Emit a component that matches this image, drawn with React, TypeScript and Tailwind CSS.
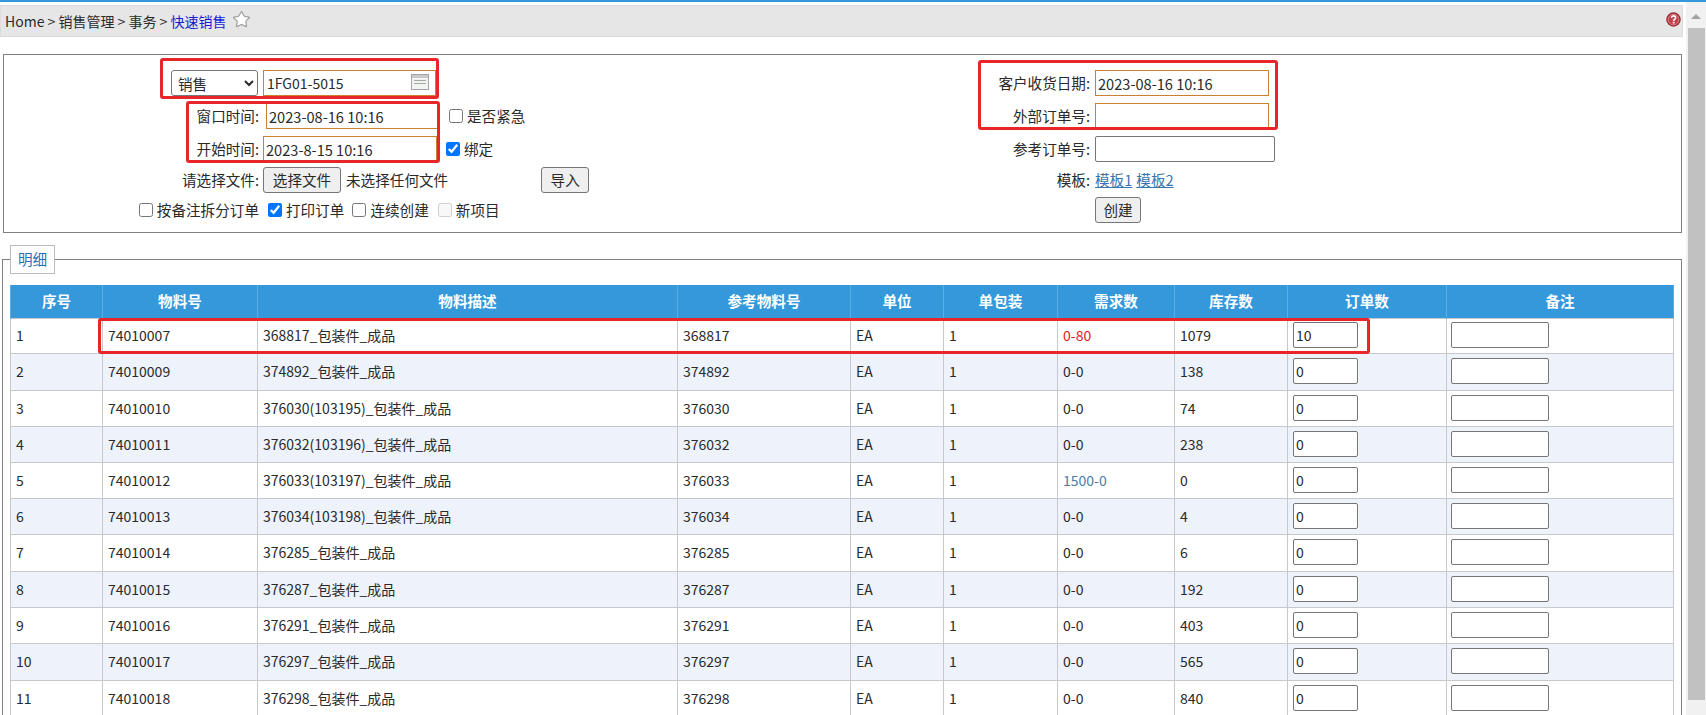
import { ReactNode } from 'react';
import { Star } from 'lucide-react';

const ROWS = [
    { no: 1, code: '74010007', desc: '368817_包装件_成品', ref: '368817', need: '0-80', stock: '1079', qty: '10', h: 'h-[35px]' },
    { no: 2, code: '74010009', desc: '374892_包装件_成品', ref: '374892', need: '0-0', stock: '138', qty: '0', h: 'h-[37px]' },
    { no: 3, code: '74010010', desc: '376030(103195)_包装件_成品', ref: '376030', need: '0-0', stock: '74', qty: '0', h: 'h-[36px]' },
    { no: 4, code: '74010011', desc: '376032(103196)_包装件_成品', ref: '376032', need: '0-0', stock: '238', qty: '0', h: 'h-[36px]' },
    { no: 5, code: '74010012', desc: '376033(103197)_包装件_成品', ref: '376033', need: '1500-0', stock: '0', qty: '0', h: 'h-[36px]' },
    { no: 6, code: '74010013', desc: '376034(103198)_包装件_成品', ref: '376034', need: '0-0', stock: '4', qty: '0', h: 'h-[36px]' },
    { no: 7, code: '74010014', desc: '376285_包装件_成品', ref: '376285', need: '0-0', stock: '6', qty: '0', h: 'h-[37px]' },
    { no: 8, code: '74010015', desc: '376287_包装件_成品', ref: '376287', need: '0-0', stock: '192', qty: '0', h: 'h-[36px]' },
    { no: 9, code: '74010016', desc: '376291_包装件_成品', ref: '376291', need: '0-0', stock: '403', qty: '0', h: 'h-[36px]' },
    { no: 10, code: '74010017', desc: '376297_包装件_成品', ref: '376297', need: '0-0', stock: '565', qty: '0', h: 'h-[37px]' },
    { no: 11, code: '74010018', desc: '376298_包装件_成品', ref: '376298', need: '0-0', stock: '840', qty: '0', h: 'h-[36px]' },
];

const HEADERS = ['序号', '物料号', '物料描述', '参考物料号', '单位', '单包装', '需求数', '库存数', '订单数', '备注'];

const needColor = (need: string) => {
    if (need === '0-80') return 'text-[#e01b24]';
    if (need === '1500-0') return 'text-[#4f7ba3]';
    return '';
};

const orangeInput = 'h-[26px] border border-[#c8812f] px-[2px] bg-white outline-none';
const grayInput = 'h-[26px] border border-[#767676] rounded-[2px] px-[2px] bg-white outline-none';
const btn = 'h-[26px] border border-[#767676] rounded-[3px] bg-[#efefef]';
const cell = 'border border-[#c6c8cc] px-[5px] pt-0 pb-[1px]';

// red marker drawn over the form / table
const Marker = ({ className }: { className: string }) => (
    <div className={`absolute border-[3px] border-[#e8262a] rounded-[3px] pointer-events-none ${className}`} />
);

const FormRow = ({ a, b, c, d, className }: { a?: ReactNode; b?: ReactNode; c?: ReactNode; d?: ReactNode; className?: string }) => (
    <div className={`grid grid-cols-[255px_531px_300px_1fr] h-[26px] items-center ${className ?? ''}`}>
        <div className="flex justify-end items-center whitespace-nowrap">{a}</div>
        <div className="flex items-center pl-[4px] whitespace-nowrap">{b}</div>
        <div className="flex justify-end items-center whitespace-nowrap">{c}</div>
        <div className="flex items-center pl-[5px] whitespace-nowrap">{d}</div>
    </div>
);

const Check = ({ checked, disabled, className }: { checked?: boolean; disabled?: boolean; className?: string }) => (
    <input type="checkbox" defaultChecked={checked} disabled={disabled} className={`w-[14px] h-[14px] m-0 ${className ?? ''}`} />
);

export default function App() {
    return (
        <div className="relative h-[715px] overflow-hidden bg-white text-[14px] leading-[20px] text-[#2a2a2a] font-['Noto_Sans_CJK_SC','Liberation_Sans',sans-serif]">
            <div className="h-[2px] bg-[#3498db]" />
            <div className="flex h-[713px]">
                <div className="w-[1686px] shrink-0">
                    {/* Breadcrumb */}
                    <div className="mt-[3px] h-[32px] w-[1683px] bg-[#e6e6e6] border border-[#dcdcdc] flex items-center pl-[4px]">
                        <span>Home &gt; 销售管理 &gt; 事务 &gt; <span className="text-[#1a1ad0]">快速销售</span></span>
                        <Star className="ml-[5px] mb-[3px] text-[#a2a2a2]" fill="#fff" size={19} strokeWidth={1.6} />
                        <svg className="ml-auto mb-[3px] mr-px" width="15" height="15" viewBox="0 0 15 15">
                            <circle cx="7.5" cy="7.5" r="7.2" fill="#98262b" />
                            <circle cx="7.5" cy="7.5" r="5.4" fill="#c2404a" stroke="#dfa6aa" strokeWidth="0.8" />
                            <path d="M5.4 5.8c.2-1.3 1.1-1.9 2.1-1.9 1.2 0 2.1.8 2.1 1.8 0 1.7-2 1.7-2 3.2" fill="none" stroke="#fff" strokeWidth="1.6" />
                            <rect x="6.8" y="9.8" width="1.7" height="1.7" fill="#fff" />
                        </svg>
                    </div>

                    {/* Form */}
                    <div className="mt-[17px] ml-[3px] w-[1679px] h-[179px] border border-[#808080] pt-[15px] flex flex-col gap-[7px] text-[14.6px]">
                        <FormRow
                            b={
                                <div className="flex items-center gap-[5px] -ml-[92px]">
                                    <select className="w-[87px] h-[26px] border border-[#767676] rounded-[3px] pl-[2px] bg-white">
                                        <option>销售</option>
                                    </select>
                                    <div className="relative">
                                        <input defaultValue="1FG01-5015" className={`${orangeInput} w-[173px] pl-[3px] text-[14px]`} />
                                        <svg className="absolute right-[7px] top-[4px]" width="18" height="16" viewBox="0 0 18 16">
                                            <rect x="0.5" y="0.5" width="17" height="15" fill="#f2f4f2" stroke="#a4a4a4" />
                                            <rect x="1" y="1" width="16" height="3" fill="#cacaca" />
                                            <path d="M3 6.5h12M3 9.5h12" stroke="#a8a8a8" />
                                        </svg>
                                    </div>
                                </div>
                            }
                            c="客户收货日期:"
                            d={<input defaultValue="2023-08-16 10:16" className={`${orangeInput} w-[174px]`} />}
                        />
                        <FormRow
                            a="窗口时间:"
                            b={
                                <div className="flex items-center">
                                    <input defaultValue="2023-08-16 10:16" className={`${orangeInput} w-[173px] ml-[3px]`} />
                                    <Check className="ml-[10px]" />
                                    <span className="ml-[4px]">是否紧急</span>
                                </div>
                            }
                            c="外部订单号:"
                            d={<input className={`${orangeInput} w-[174px]`} />}
                        />
                        <FormRow
                            a="开始时间:"
                            b={
                                <div className="flex items-center">
                                    <input defaultValue="2023-8-15 10:16" className={`${orangeInput} w-[174px]`} />
                                    <Check checked className="ml-[9px]" />
                                    <span className="ml-[4px]">绑定</span>
                                </div>
                            }
                            c="参考订单号:"
                            d={<input className={`${grayInput} w-[180px]`} />}
                        />
                        <FormRow
                            className="-mt-[2px]"
                            a="请选择文件:"
                            b={
                                <div className="flex items-center">
                                    <button className={`${btn} w-[78px]`}>选择文件</button>
                                    <span className="ml-[5px]">未选择任何文件</span>
                                    <button className={`${btn} w-[48px] ml-[93px]`}>导入</button>
                                </div>
                            }
                            c="模板:"
                            d={
                                <span className="text-[#3a75ad] underline">
                                    模板1<span className="ml-[4px]">模板2</span>
                                </span>
                            }
                        />
                        <FormRow
                            className="-mt-[3px]"
                            a={
                                <div className="flex items-center">
                                    <Check />
                                    <span className="ml-[4px]">按备注拆分订单</span>
                                </div>
                            }
                            b={
                                <div className="flex items-center ml-[5px]">
                                    <Check checked />
                                    <span className="ml-[4px]">打印订单</span>
                                    <Check className="ml-[8px]" />
                                    <span className="ml-[4px]">连续创建</span>
                                    <Check disabled className="ml-[9px]" />
                                    <span className="ml-[4px]">新项目</span>
                                </div>
                            }
                            d={<button className={`${btn} w-[46px]`}>创建</button>}
                        />
                    </div>

                    {/* Detail */}
                    <fieldset className="mt-[12px] ml-[2px] w-[1680px] border border-[#808080] pl-[7px] h-[480px]">
                        <legend className="w-[45px] h-[29px] border border-[#bcbcbc] bg-white pl-[7px] leading-[26px] text-[14.6px] text-[#2a6db5]">明细</legend>
                        <table className="mt-[11px] table-fixed border-collapse w-[1664px]">
                            <colgroup>
                                <col className="w-[92px]" />
                                <col className="w-[155px]" />
                                <col className="w-[420px]" />
                                <col className="w-[173px]" />
                                <col className="w-[93px]" />
                                <col className="w-[114px]" />
                                <col className="w-[117px]" />
                                <col className="w-[113px]" />
                                <col className="w-[159px]" />
                                <col />
                            </colgroup>
                            <thead>
                                <tr className="h-[33px] bg-[#3498db] text-white text-[14.6px]">
                                    {HEADERS.map(h => (
                                        <th key={h} className="border-x border-[#5aaee3] font-bold text-center p-0">{h}</th>
                                    ))}
                                </tr>
                            </thead>
                            <tbody>
                                {ROWS.map(r => (
                                    <tr key={r.no} className={`${r.h} ${r.no % 2 === 0 ? 'bg-[#edf2fb]' : 'bg-white'}`}>
                                        <td className={cell}>{r.no}</td>
                                        <td className={cell}>{r.code}</td>
                                        <td className={cell}>{r.desc}</td>
                                        <td className={cell}>{r.ref}</td>
                                        <td className={cell}>EA</td>
                                        <td className={cell}>1</td>
                                        <td className={`${cell} ${needColor(r.need)}`}>{r.need}</td>
                                        <td className={cell}>{r.stock}</td>
                                        <td className={cell}>
                                            <input defaultValue={r.qty} className={`${grayInput} w-[65px] block`} />
                                        </td>
                                        <td className={`${cell} pl-[4px]`}>
                                            <input className={`${grayInput} w-[98px] block`} />
                                        </td>
                                    </tr>
                                ))}
                            </tbody>
                        </table>
                    </fieldset>
                </div>

                {/* Scrollbar */}
                <div className="flex-1 bg-[#f1f1f1] flex flex-col items-center pt-[12px]">
                    <div className="w-0 h-0 border-x-[5px] border-x-transparent border-b-[5px] border-b-[#a3a3a3]" />
                    <div className="mt-[9px] w-[17px] h-[672px] bg-[#c1c1c1]" />
                </div>
            </div>

            <Marker className="left-[160px] top-[58px] w-[279px] h-[41px]" />
            <Marker className="left-[186px] top-[101px] w-[254px] h-[62px]" />
            <Marker className="left-[978px] top-[60px] w-[300px] h-[70px]" />
            <Marker className="left-[98px] top-[318px] w-[1272px] h-[36px]" />
        </div>
    );
}
